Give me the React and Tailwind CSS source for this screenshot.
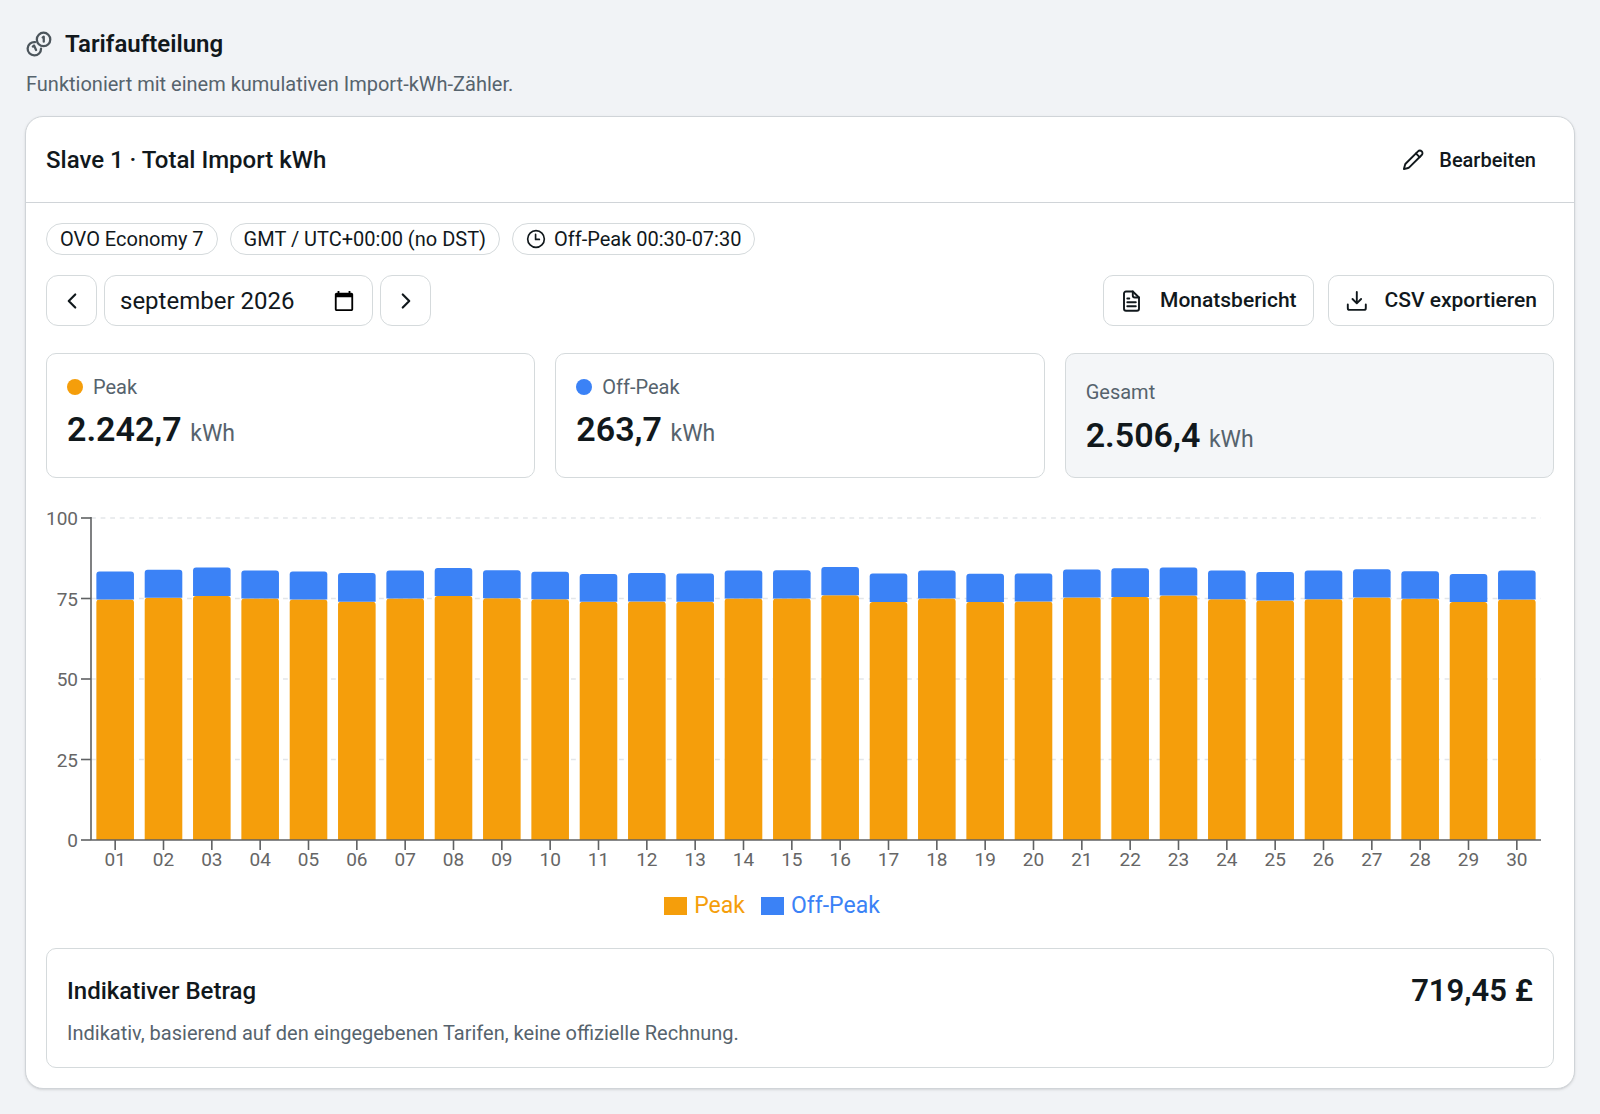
const days = [
  [74.7, 83.4], [75.2, 83.9], [75.8, 84.6], [75.0, 83.7], [74.7, 83.4],
  [74.0, 82.9], [75.0, 83.7], [75.8, 84.5], [75.1, 83.8], [74.8, 83.3],
  [74.0, 82.6], [74.1, 82.9], [74.0, 82.8], [75.0, 83.7], [75.0, 83.8],
  [76.0, 84.8], [73.9, 82.8], [75.0, 83.7], [73.9, 82.7], [74.1, 82.8],
  [75.3, 84.0], [75.5, 84.4], [75.9, 84.6], [74.8, 83.7], [74.4, 83.2],
  [74.8, 83.7], [75.3, 84.1], [74.9, 83.5], [73.9, 82.6], [74.7, 83.7],
];

function Icon({ className, strokeWidth = 2, children }) {
  return (
    <svg
      viewBox="0 0 24 24"
      fill="none"
      stroke="currentColor"
      strokeWidth={strokeWidth}
      strokeLinecap="round"
      strokeLinejoin="round"
      aria-hidden="true"
      className={className}
    >
      {children}
    </svg>
  );
}

function Chart() {
  const left = 45;
  const right = 1495;
  const base = 342;
  const unit = 3.22;
  const step = (right - left) / days.length;
  const bar = 37.6;
  return (
    <svg viewBox="0 0 1508 381" className="mt-5 block h-auto w-full" role="img" aria-label="Peak und Off-Peak pro Tag">
      {[25, 50, 75, 100].map((v) => (
        <line key={v} x1={left} x2={right} y1={base - v * unit} y2={base - v * unit} stroke="#e3e6e9" strokeWidth="1.6" strokeDasharray="4.8 4.8" />
      ))}
      {days.map(([peak, total], i) => {
        const x = left + i * step + (step - bar) / 2;
        const peakTop = base - peak * unit;
        const totalTop = base - total * unit;
        const top = (y, bottom) => `M${x} ${bottom}V${y + 3}q0-3 3-3h${bar - 6}q3 0 3 3V${bottom}z`;
        return (
          <g key={i}>
            <path d={top(peakTop, base)} fill="#f59e0b" />
            <path d={top(totalTop, peakTop)} fill="#3b82f6" />
          </g>
        );
      })}
      <g stroke="#5f6163" strokeWidth="1.6">
        <line x1={left} x2={left} y1={base - 100 * unit - 1} y2={base} />
        <line x1={left} x2={right} y1={base} y2={base} />
        {[0, 25, 50, 75, 100].map((v) => (
          <line key={v} x1={left - 10} x2={left} y1={base - v * unit} y2={base - v * unit} />
        ))}
        {days.map((_, i) => (
          <line key={i} x1={left + (i + 0.5) * step} x2={left + (i + 0.5) * step} y1={base} y2={base + 10} />
        ))}
      </g>
      <g fill="#666666" fontSize="19">
        {[0, 25, 50, 75, 100].map((v) => (
          <text key={v} x="32" y={base - v * unit + 7} textAnchor="end">{v}</text>
        ))}
        {days.map((_, i) => (
          <text key={i} x={left + (i + 0.5) * step} y="368" textAnchor="middle">{String(i + 1).padStart(2, "0")}</text>
        ))}
      </g>
    </svg>
  );
}

const pill = "flex h-8 items-center gap-2 rounded-full border border-[#d5dadc] px-[13px] text-xl";
const button = "flex h-[51px] items-center gap-4 rounded-[10px] border border-[#d5dadc] px-4 text-[21px] font-medium";
const square = "flex size-[51px] items-center justify-center rounded-xl border border-[#d5dadc]";

function Stat({ color, label, value }) {
  return (
    <div className="rounded-[10px] border border-[#d5dadc] p-5">
      <div className="flex items-center gap-[10px] text-xl leading-[26px] text-[#56636d]">
        <span className={`size-4 rounded-full ${color}`} />
        {label}
      </div>
      <div className="mt-2 text-[34px] leading-[42px] font-semibold">
        {value} <span className="text-[23px] font-normal text-[#56636d]">kWh</span>
      </div>
    </div>
  );
}

export default function App() {
  return (
    <main className="min-h-screen bg-[#f1f3f6] px-[25px] pt-7 pb-6 font-['Roboto',sans-serif] text-[#11181c]">
      <div className="flex items-center gap-[13px] pl-px">
        <Icon className="size-[26px] text-[#4c555c]" strokeWidth={2.1}>
          <circle cx="16.2" cy="7.8" r="6.2" />
          <path d="M8.3 10.2a6.2 6.2 0 1 0 5.6 6" />
          <path d="M15.400 5.900l1-.6v4.600" />
          <path d="M6.300 14.400l1.100-1 1.900 4.100" />
        </Icon>
        <h1 className="text-2xl leading-8 font-semibold">Tarifaufteilung</h1>
      </div>
      <p className="mt-[10px] pl-px text-xl leading-7 text-[#56636d]">Funktioniert mit einem kumulativen Import-kWh-Zähler.</p>

      <section className="mt-[18px] rounded-[18px] border border-[#d0d4d8] bg-white shadow-sm">
        <header className="flex items-center justify-between border-b border-[#d0d4d8] px-5 py-4">
          <h2 className="text-2xl font-medium">Slave 1 · Total Import kWh</h2>
          <button type="button" className="flex h-[53px] items-center gap-[14px] px-[18px] text-xl font-medium">
            <Icon className="size-6" strokeWidth={1.9}>
              <path d="M20.7 3.3a2.6 2.6 0 0 0-3.7 0L4.8 15.5a3 3 0 0 0-.8 1.4l-1.1 4.2 4.2-1.1a3 3 0 0 0 1.4-.8L20.7 7a2.6 2.6 0 0 0 0-3.7z" />
              <path d="M14.9 5.4l3.7 3.7" />
            </Icon>
            Bearbeiten
          </button>
        </header>

        <div className="p-5">
          <div className="flex flex-wrap gap-3">
            <span className={pill}>OVO Economy 7</span>
            <span className={pill}>GMT / UTC+00:00 (no DST)</span>
            <span className={pill}>
              <Icon className="size-5">
                <circle cx="12" cy="12" r="10" />
                <path d="M11.5 6.5v6H16" />
              </Icon>
              Off-Peak 00:30-07:30
            </span>
          </div>

          <div className="mt-5 flex flex-wrap items-center justify-between gap-4">
            <div className="flex items-center gap-[7px]">
              <button type="button" aria-label="Vorheriger Monat" className={square}>
                <Icon className="size-[26px]"><path d="M15 18l-6-6 6-6" /></Icon>
              </button>
              <div className="flex h-[51px] w-[269px] items-center rounded-xl border border-[#d5dadc] pr-[17px] pl-[15px]">
                <input type="text" aria-label="Monat" defaultValue="september 2026" className="min-w-0 flex-1 bg-transparent text-2xl outline-none" />
                <button type="button" aria-label="Kalender öffnen">
                  <svg viewBox="0 0 24 24" fill="black" className="size-[22px]" aria-hidden="true">
                    <path d="M20 3h-1V1h-2v2H7V1H5v2H4c-1.1 0-2 .9-2 2v16c0 1.100.9 2 2 2h16c1.100 0 2-.9 2-2V5c0-1.100-.9-2-2-2zm0 18H4V8h16v13z" />
                  </svg>
                </button>
              </div>
              <button type="button" aria-label="Nächster Monat" className={square}>
                <Icon className="size-[26px]"><path d="M9 18l6-6-6-6" /></Icon>
              </button>
            </div>
            <div className="flex gap-[14px]">
              <button type="button" className={button}>
                <Icon className="size-6" strokeWidth={1.9}>
                  <path d="M12.800 2.500H6a2 2 0 0 0-2 2v15.200a2 2 0 0 0 2 2h11a2 2 0 0 0 2-2V8.500z" />
                  <path d="M12.800 2.500v4a2 2 0 0 0 2 2H19" />
                  <path d="M7.300 9.500h2M7.300 13.300h8.500M7.300 17.200h8.500" />
                </Icon>
                Monatsbericht
              </button>
              <button type="button" className={button}>
                <Icon className="size-6" strokeWidth={1.9}>
                  <path d="M11.800 3v11M7.500 10l4.300 4.300L16.100 10" />
                  <path d="M2.800 15.500v3.700a1.700 1.700 0 0 0 1.700 1.700h14.600a1.700 1.700 0 0 0 1.700-1.700v-3.700" />
                </Icon>
                CSV exportieren
              </button>
            </div>
          </div>

          <div className="mt-[27px] grid grid-cols-3 gap-5">
            <Stat color="bg-[#f59e0b]" label="Peak" value="2.242,7" />
            <Stat color="bg-[#3b82f6]" label="Off-Peak" value="263,7" />
            <div className="rounded-[10px] border border-[#d5dadc] bg-[#f4f6f8] px-5 pt-5 pb-4">
              <div className="text-xl leading-9 text-[#56636d]">Gesamt</div>
              <div className="mt-1 text-[34px] leading-[42px] font-semibold">
                2.506,4 <span className="text-[23px] font-normal text-[#56636d]">kWh</span>
              </div>
            </div>
          </div>

          <Chart />

          <div className="flex h-[54px] items-center justify-center gap-4 pr-14 text-[23px]">
            <span className="flex items-center gap-[7px] text-[#f59e0b]">
              <span className="h-[18px] w-[23px] bg-[#f59e0b]" />
              Peak
            </span>
            <span className="flex items-center gap-[7px] text-[#3b82f6]">
              <span className="h-[18px] w-[23px] bg-[#3b82f6]" />
              Off-Peak
            </span>
          </div>

          <div className="mt-[15px] flex items-start justify-between rounded-[10px] border border-[#d5dadc] px-5 pt-[26px] pb-5">
            <div>
              <h3 className="text-2xl leading-8 font-medium">Indikativer Betrag</h3>
              <p className="mt-3 text-xl leading-7 text-[#56636d]">Indikativ, basierend auf den eingegebenen Tarifen, keine offizielle Rechnung.</p>
            </div>
            <div className="text-[31px] leading-8 font-semibold">719,45 £</div>
          </div>
        </div>
      </section>
    </main>
  );
}
